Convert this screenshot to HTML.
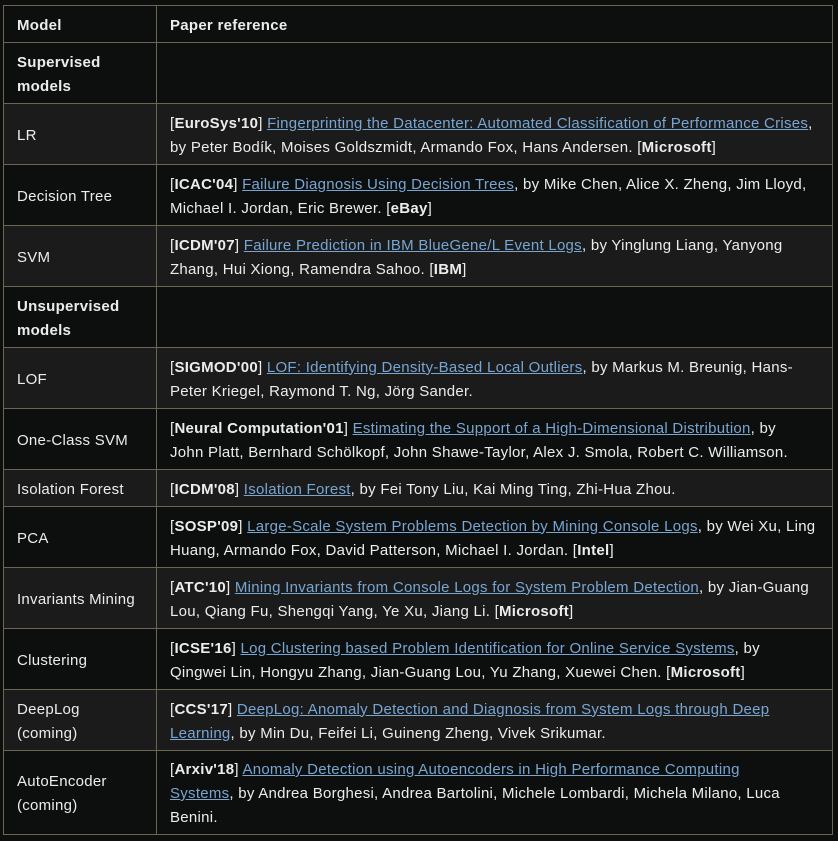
<!DOCTYPE html>
<html><head><meta charset="utf-8"><style>
html,body{margin:0;padding:0;background:#0d0e0e;}
body{font-family:"Liberation Sans",sans-serif;font-size:15px;letter-spacing:0.27px;color:#ececec;}
table{position:absolute;left:3px;top:5px;width:830px;border-collapse:collapse;table-layout:fixed;}
td,th{border:1px solid #6e6452;padding:3px 16px 0 13px;line-height:24px;text-align:left;vertical-align:middle;}
th{font-weight:bold;height:33px;}
col.a{width:153px;}
tr{background:#0d0e0e;}
tr.l{background:#1b1b1b;}
tr.r2 td{height:57px;}
tr.r1 td{height:33px;}
tr.r3 td{height:80px;}
a{color:#78a6d2;text-decoration:underline;}
b{font-weight:bold;}
</style></head><body>
<table>
<colgroup><col class="a"><col></colgroup>
<tr><th>Model</th><th>Paper reference</th></tr>
<tr class="r2"><td><b>Supervised<br>models</b></td><td></td></tr>
<tr class="l r2"><td>LR</td><td>[<b>EuroSys'10</b>] <a>Fingerprinting the Datacenter: Automated Classification of Performance Crises</a>,<br>by Peter Bodík, Moises Goldszmidt, Armando Fox, Hans Andersen. [<b>Microsoft</b>]</td></tr>
<tr class="r2"><td>Decision Tree</td><td>[<b>ICAC'04</b>] <a>Failure Diagnosis Using Decision Trees</a>, by Mike Chen, Alice X. Zheng, Jim Lloyd,<br>Michael I. Jordan, Eric Brewer. [<b>eBay</b>]</td></tr>
<tr class="l r2"><td>SVM</td><td>[<b>ICDM'07</b>] <a>Failure Prediction in IBM BlueGene/L Event Logs</a>, by Yinglung Liang, Yanyong<br>Zhang, Hui Xiong, Ramendra Sahoo. [<b>IBM</b>]</td></tr>
<tr class="r2"><td><b>Unsupervised<br>models</b></td><td></td></tr>
<tr class="l r2"><td>LOF</td><td>[<b>SIGMOD'00</b>] <a>LOF: Identifying Density-Based Local Outliers</a>, by Markus M. Breunig, Hans-<br>Peter Kriegel, Raymond T. Ng, Jörg Sander.</td></tr>
<tr class="r2"><td>One-Class SVM</td><td>[<b>Neural Computation'01</b>] <a>Estimating the Support of a High-Dimensional Distribution</a>, by<br>John Platt, Bernhard Schölkopf, John Shawe-Taylor, Alex J. Smola, Robert C. Williamson.</td></tr>
<tr class="l r1"><td>Isolation Forest</td><td>[<b>ICDM'08</b>] <a>Isolation Forest</a>, by Fei Tony Liu, Kai Ming Ting, Zhi-Hua Zhou.</td></tr>
<tr class="r2"><td>PCA</td><td>[<b>SOSP'09</b>] <a>Large-Scale System Problems Detection by Mining Console Logs</a>, by Wei Xu, Ling<br>Huang, Armando Fox, David Patterson, Michael I. Jordan. [<b>Intel</b>]</td></tr>
<tr class="l r2"><td>Invariants Mining</td><td>[<b>ATC'10</b>] <a>Mining Invariants from Console Logs for System Problem Detection</a>, by Jian-Guang<br>Lou, Qiang Fu, Shengqi Yang, Ye Xu, Jiang Li. [<b>Microsoft</b>]</td></tr>
<tr class="r2"><td>Clustering</td><td>[<b>ICSE'16</b>] <a>Log Clustering based Problem Identification for Online Service Systems</a>, by<br>Qingwei Lin, Hongyu Zhang, Jian-Guang Lou, Yu Zhang, Xuewei Chen. [<b>Microsoft</b>]</td></tr>
<tr class="l r2"><td>DeepLog<br>(coming)</td><td>[<b>CCS'17</b>] <a>DeepLog: Anomaly Detection and Diagnosis from System Logs through Deep<br>Learning</a>, by Min Du, Feifei Li, Guineng Zheng, Vivek Srikumar.</td></tr>
<tr class="r3"><td>AutoEncoder<br>(coming)</td><td>[<b>Arxiv'18</b>] <a>Anomaly Detection using Autoencoders in High Performance Computing<br>Systems</a>, by Andrea Borghesi, Andrea Bartolini, Michele Lombardi, Michela Milano, Luca<br>Benini.</td></tr>
</table>
</body></html>
